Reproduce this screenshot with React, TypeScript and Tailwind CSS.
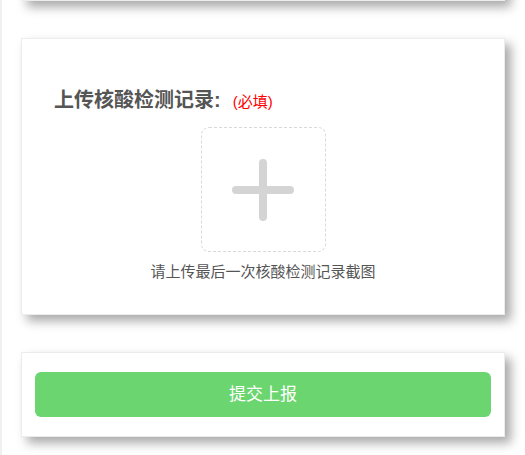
import React from "react";

const card = "bg-white border border-[#ececec] shadow-[6px_6px_10px_rgba(0,0,0,0.34)]";

export default function App() {
    return (
        <div
            className="min-h-[455px] bg-white border-l-2 border-[#f0f0f0] overflow-hidden"
            style={{ fontFamily: '"Liberation Sans", "Noto Sans CJK SC", sans-serif' }}
        >
            <div className="pl-[19px] pr-[20px]">
                {/* previous card, scrolled off */}
                <div className={`${card} h-[60px] -mt-[59px]`} />

                {/* upload card */}
                <div className={`${card} mt-[37px] h-[277px] pt-[47px]`}>
                    <div className="flex items-baseline pl-[32px]">
                        <span className="text-[20px] font-bold text-[#555] leading-7">上传核酸检测记录:</span>
                        <span className="ml-[12px] text-[15px] text-[#ff0000]">(必填)</span>
                    </div>
                    <div className="flex flex-col items-center mt-[13px]">
                        <button className="w-[125px] h-[125px] rounded-[8px] border border-dashed border-[#d9d9d9] flex items-center justify-center cursor-pointer">
                            <svg width="62" height="62" viewBox="0 0 62 62">
                                <path d="M31 4 V58 M4 31 H58" stroke="#d4d4d4" strokeWidth="8" strokeLinecap="round" />
                            </svg>
                        </button>
                        <p className="mt-[10px] text-[15px] leading-5 text-[#555]">请上传最后一次核酸检测记录截图</p>
                    </div>
                </div>

                {/* submit card */}
                <div className={`${card} mt-[37px] px-[13px] py-[19px]`}>
                    <button className="w-full h-[45px] rounded-[6px] bg-[#6bd56f] text-white text-[17px] cursor-pointer">
                        提交上报
                    </button>
                </div>
            </div>
        </div>
    );
}
